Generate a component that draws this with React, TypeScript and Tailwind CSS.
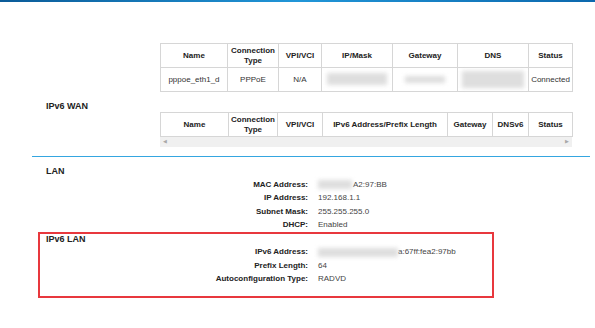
import React from "react";

const wan = [
  { h: ["Name"], w: 67 },
  { h: ["Connection", "Type"], w: 51 },
  { h: ["VPI/VCI"], w: 43 },
  { h: ["IP/Mask"], w: 71 },
  { h: ["Gateway"], w: 65 },
  { h: ["DNS"], w: 71 },
  { h: ["Status"], w: 44 },
];

const wan6 = [
  { h: ["Name"], w: 68 },
  { h: ["Connection", "Type"], w: 49 },
  { h: ["VPI/VCI"], w: 45 },
  { h: ["IPv6 Address/Prefix Length"], w: 125 },
  { h: ["Gateway"], w: 45 },
  { h: ["DNSv6"], w: 36 },
  { h: ["Status"], w: 44 },
];

// masked value: a soft gray smudge
const Blur = ({ w, h = 9 }: { w: number; h?: number }) => (
  <span className="inline-block bg-[#dedede] blur-[2px] align-middle" style={{ width: w, height: h }} />
);

const HeadRow = ({ cols }: { cols: { h: string[]; w: number }[] }) => (
  <tr className="h-[24px]">
    {cols.map((c) => (
      <th key={c.h.join()} style={{ width: c.w }} className="border border-[#d6d6d6] font-bold text-[8px] leading-[10px] text-[#222] text-center align-middle">
        {c.h.map((l) => (
          <div key={l}>{l}</div>
        ))}
      </th>
    ))}
  </tr>
);

const Row = ({ label, children, w }: { label: string; children: React.ReactNode; w: number }) => (
  <div className="flex items-center h-[13.5px] text-[8px]">
    <div className="text-right font-bold text-[#222]" style={{ width: w }}>
      {label}
    </div>
    <div className="ml-[10px] text-[#444] flex items-center">{children}</div>
  </div>
);

export default function App() {
  return (
    <div className="w-[595px] h-[328px] bg-white overflow-hidden font-['Liberation_Sans',Arial,sans-serif]">
      <div className="h-[2px] bg-gradient-to-r from-[#0b5b98] via-[#2196d8] to-[#0c68ad]" />
      <div className="ml-[32px] w-[558px]">
        <div className="pl-[128px] mt-[41px]">
          <table className="table-fixed border-collapse w-[412px]">
            <thead>
              <HeadRow cols={wan} />
            </thead>
            <tbody>
              <tr className="h-[24px] text-[8px] text-[#333] text-center">
                <td className="border border-[#d6d6d6]">pppoe_eth1_d</td>
                <td className="border border-[#d6d6d6]">PPPoE</td>
                <td className="border border-[#d6d6d6]">N/A</td>
                <td className="border border-[#d6d6d6]">
                  <Blur w={60} h={12} />
                </td>
                <td className="border border-[#d6d6d6]">
                  <Blur w={40} h={7} />
                </td>
                <td className="border border-[#d6d6d6]">
                  <Blur w={62} h={17} />
                </td>
                <td className="border border-[#d6d6d6] text-[#333]">Connected</td>
              </tr>
            </tbody>
          </table>
        </div>

        <div className="mt-[8px] h-[12px] leading-[12px] pl-[14px] text-[9px] font-bold text-[#222]">IPv6 WAN</div>

        <div className="pl-[128px]">
          <table className="table-fixed border-collapse w-[412px]">
            <thead>
              <HeadRow cols={wan6} />
            </thead>
          </table>
          <div className="w-[412px] h-[10px] bg-[#f0f0f0] flex items-center justify-between px-[3px] text-[5px] text-[#a8a8a8]">
            <span>◀</span>
            <span>▶</span>
          </div>
        </div>

        <div className="mt-[9px] h-px bg-[#35a6e0]" />

        <div className="mt-[8px] h-[12px] leading-[12px] pl-[14px] text-[9px] font-bold text-[#222]">LAN</div>
        <div className="mt-[1px]">
          <Row label="MAC Address:" w={276}>
            <Blur w={34} />
            <span className="ml-[1px]">A2:97:BB</span>
          </Row>
          <Row label="IP Address:" w={276}>192.168.1.1</Row>
          <Row label="Subnet Mask:" w={276}>255.255.255.0</Row>
          <Row label="DHCP:" w={276}>Enabled</Row>
        </div>
      </div>

      <div className="ml-[38px] w-[456px] h-[66px] border-2 border-[#e8383d]">
        <div className="h-[10px] leading-[10px] pl-[6px] text-[9px] font-bold text-[#222]">IPv6 LAN</div>
        <div className="mt-[1.5px]">
          <Row label="IPv6 Address:" w={268}>
            <Blur w={80} />
            <span>a:67ff:fea2:97bb</span>
          </Row>
          <Row label="Prefix Length:" w={268}>64</Row>
          <Row label="Autoconfiguration Type:" w={268}>RADVD</Row>
        </div>
      </div>
    </div>
  );
}
